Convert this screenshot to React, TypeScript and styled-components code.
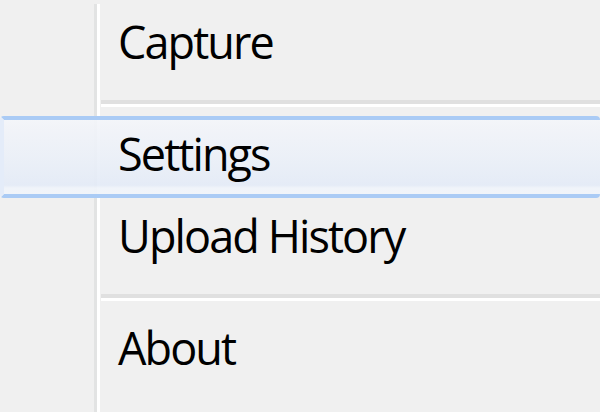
import React from "react";
import styled, { createGlobalStyle } from "styled-components";

const Global = createGlobalStyle`
  html, body { margin: 0; padding: 0; background: #f0f0f0; }
  body { width: 600px; height: 412px; overflow: hidden; }
`;

const Menu = styled.div`
  box-sizing: border-box;
  width: 600px;
  height: 412px;
  padding-top: 4px;
  overflow: hidden;
  background-color: #f0f0f0;
  background-image: linear-gradient(
    to right,
    transparent 94px,
    #e2e3e3 94px,
    #e2e3e3 97px,
    #ffffff 97px,
    #ffffff 100px,
    transparent 100px
  );
  background-repeat: no-repeat;
  background-position: 0 4px;
  display: flex;
  flex-direction: column;
  font-family: "Open Sans", "Noto Sans", sans-serif;
  color: #000;
`;

const Item = styled.div<{ $active?: boolean }>`
  box-sizing: border-box;
  height: 82px;
  display: flex;
  align-items: flex-start;
  padding-left: 118px;
  font-size: 45px;
  letter-spacing: -1.9px;
  line-height: 76px;
  white-space: nowrap;
  ${(p) =>
    p.$active
      ? `
    border-top: 4px solid #aacbf5;
    border-bottom: 4px solid #aacbf5;
    border-left: 4px solid #e4ecf9;
    border-radius: 4px;
    padding-left: 114px;
    line-height: 68px;
    background: linear-gradient(to bottom, rgba(244,246,250,0.92) 0%, rgba(242,244,249,0.92) 8%, rgba(235,240,248,0.92) 50%, rgba(228,235,247,0.92) 88%, rgba(240,244,250,0.95) 92%, rgba(240,244,250,0.95) 100%);
  `
      : ""}
`;

const Separator = styled.div`
  height: 30px;
  margin-left: 101px;
  display: flex;
  flex-direction: column;
  padding-top: 14px;
  box-sizing: border-box;
  &::before {
    content: "";
    display: block;
    height: 4px;
    background: #e0e0e0;
  }
  &::after {
    content: "";
    display: block;
    height: 3px;
    background: #ffffff;
  }
`;

export default function App() {
  return (
    <>
      <Global />
      <Menu>
        <Item>Capture</Item>
        <Separator />
        <Item $active>Settings</Item>
        <Item>Upload History</Item>
        <Separator />
        <Item>About</Item>
      </Menu>
    </>
  );
}
